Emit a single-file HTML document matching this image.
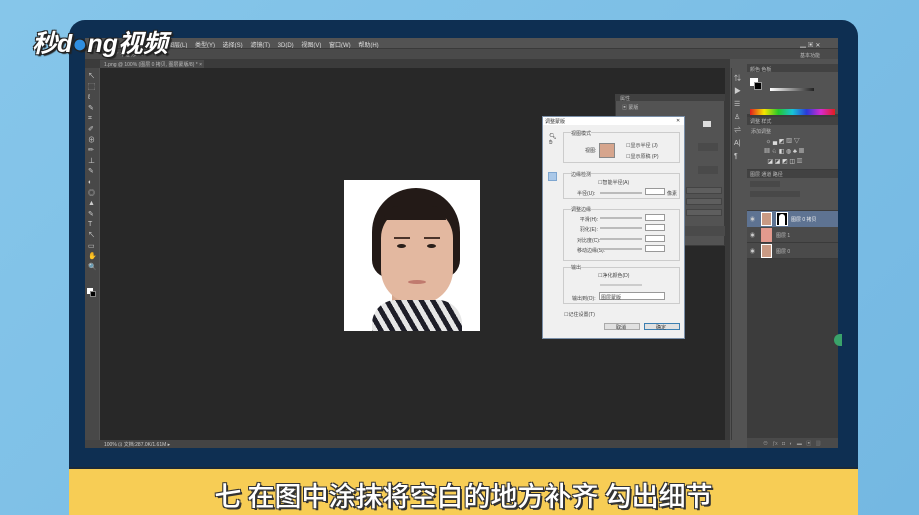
<!DOCTYPE html>
<html><head><meta charset="utf-8"><style>
*{margin:0;padding:0;box-sizing:border-box}
body{width:919px;height:515px;overflow:hidden;background:linear-gradient(135deg,#86c6ea,#74b8e2);position:relative;font-family:"Liberation Sans","Noto Sans CJK SC",sans-serif}
.a{position:absolute}
.t{font-size:5px;color:#bbb;white-space:nowrap}
</style></head><body>
<div class="a" style="left:69px;top:20px;width:789px;height:470px;background:#0e2f52;border-radius:16px 16px 0 0"></div>
<!-- PS window -->
<div class="a" style="left:85px;top:38px;width:753px;height:410px;background:#535353"></div>
<div class="a t" style="left:168px;top:40px;font-size:6px;color:#ddd;word-spacing:6px">图层(L) 类型(Y) 选择(S) 滤镜(T) 3D(D) 视图(V) 窗口(W) 帮助(H)</div>
<div class="a t" style="left:800px;top:40px;color:#ddd;font-size:6px">▁ ▣ ✕</div>
<div class="a" style="left:85px;top:48px;width:753px;height:11px;background:#4a4a4a;border-top:1px solid #3a3a3a"></div>
<div class="a t" style="left:800px;top:52px">基本功能</div>
<div class="a t" style="left:110px;top:51px;color:#ccc">⟋ ⟋ 不透明: 25</div>
<div class="a" style="left:85px;top:59px;width:645px;height:9px;background:#3b3b3b"></div>
<div class="a" style="left:100px;top:60px;width:104px;height:8px;background:#4a4a4a"></div>
<div class="a t" style="left:104px;top:61px">1.png @ 100% (图层 0 拷贝, 图层蒙版/8) * ×</div>
<!-- toolbar -->
<div class="a" style="left:85px;top:68px;width:14px;height:372px;background:#484848"></div>
<div class="a t" style="left:88px;top:72px;color:#ccc;line-height:10.6px;font-size:7px;white-space:pre">↖
⬚
ℓ
✎
⌗
✐
⊕
✏
⊥
✎
◐
◎
▲
✎
T
↖
▭
✋
🔍</div>
<div class="a" style="left:87px;top:288px;width:6px;height:6px;background:#fff"></div>
<div class="a" style="left:90px;top:291px;width:6px;height:6px;background:#000;border:1px solid #888"></div>
<!-- canvas -->
<div class="a" style="left:100px;top:68px;width:625px;height:372px;background:#282828"></div>
<div class="a" style="left:725px;top:68px;width:5px;height:372px;background:#3a3a3a"></div>
<div class="a" style="left:85px;top:440px;width:645px;height:8px;background:#444"></div>
<div class="a t" style="left:104px;top:441px;color:#ccc">100% ⊡   文档:287.0K/1.61M   ▸</div>
<!-- photo -->
<div class="a" style="left:344px;top:180px;width:136px;height:151px;background:#fff;overflow:hidden">
<div class="a" style="left:28px;top:8px;width:88px;height:90px;background:#231a17;border-radius:44px 44px 18px 18px"></div>
<div class="a" style="left:48px;top:112px;width:40px;height:20px;background:#d7a88f"></div>
<div class="a" style="left:37px;top:28px;width:72px;height:96px;background:#e3b8a0;border-radius:30px 30px 34px 34px"></div>
<div class="a" style="left:40px;top:26px;width:62px;height:14px;background:#231a17;border-radius:30px 30px 0 0"></div>
<div class="a" style="left:50px;top:57px;width:16px;height:2px;background:#4a332a"></div>
<div class="a" style="left:80px;top:57px;width:16px;height:2px;background:#4a332a"></div>
<div class="a" style="left:53px;top:64px;width:9px;height:4px;background:#2a1f1a;border-radius:50%"></div>
<div class="a" style="left:83px;top:64px;width:9px;height:4px;background:#2a1f1a;border-radius:50%"></div>
<div class="a" style="left:64px;top:100px;width:18px;height:4px;background:#c07a6e;border-radius:50%"></div>
<div class="a" style="left:28px;top:120px;width:90px;height:40px;background:repeating-linear-gradient(60deg,#1e1e28 0 5px,#e6e6e6 5px 10px);border-radius:24px 24px 0 0"></div>
</div>
<!-- properties panel -->
<div class="a" style="left:615px;top:94px;width:110px;height:152px;background:#535353;border:1px solid #3a3a3a"></div>
<div class="a" style="left:615px;top:94px;width:110px;height:7px;background:#404040"></div>
<div class="a t" style="left:620px;top:95px">属性</div>
<div class="a t" style="left:622px;top:104px">▣ 蒙版</div>
<div class="a" style="left:703px;top:121px;width:8px;height:6px;background:#ddd"></div>
<div class="a" style="left:698px;top:143px;width:20px;height:8px;background:#4a4a4a"></div>
<div class="a" style="left:698px;top:166px;width:20px;height:8px;background:#4a4a4a"></div>
<div class="a" style="left:686px;top:187px;width:36px;height:7px;background:#5e5e5e;border:1px solid #444"></div>
<div class="a" style="left:686px;top:198px;width:36px;height:7px;background:#5e5e5e;border:1px solid #444"></div>
<div class="a" style="left:686px;top:209px;width:36px;height:7px;background:#5e5e5e;border:1px solid #444"></div>
<div class="a" style="left:615px;top:226px;width:110px;height:10px;background:#4a4a4a"></div>
<!-- middle icon column -->
<div class="a" style="left:731px;top:68px;width:14px;height:372px;background:#535353;border-left:1px solid #3a3a3a"></div>
<div class="a t" style="left:734px;top:72px;color:#ccc;line-height:13px;font-size:7px;white-space:pre">⇅
▶
☰
♙
⇌
A|
¶</div>
<!-- right panel -->
<div class="a" style="left:747px;top:64px;width:91px;height:384px;background:#3c3c3c"></div>
<div class="a" style="left:747px;top:64px;width:91px;height:50px;background:#535353"></div>
<div class="a" style="left:747px;top:64px;width:91px;height:8px;background:#424242"></div>
<div class="a t" style="left:750px;top:66px">颜色  色板</div>
<div class="a" style="left:750px;top:78px;width:8px;height:8px;background:#fff"></div>
<div class="a" style="left:754px;top:82px;width:8px;height:8px;background:#000;border:1px solid #999"></div>
<div class="a" style="left:770px;top:88px;width:44px;height:3px;background:linear-gradient(90deg,#fff,#222)"></div>
<div class="a" style="left:750px;top:109px;width:85px;height:6px;background:linear-gradient(90deg,#e21d1d,#f5e500,#25c82c,#18c4d8,#2a39d8,#d82ad0,#e21d1d)"></div>
<div class="a" style="left:747px;top:117px;width:91px;height:52px;background:#535353;border-top:1px solid #3a3a3a"></div>
<div class="a" style="left:747px;top:117px;width:91px;height:8px;background:#424242"></div>
<div class="a t" style="left:750px;top:118px">调整  样式</div>
<div class="a t" style="left:751px;top:128px">添加调整</div>
<div class="a t" style="left:764px;top:137px;color:#ddd;font-size:6px;line-height:10px;white-space:pre"> ☼ ▄ ◩ ▨ ▽
▦ ♘ ◧ ◍ ♣ ▦
  ◪ ◪ ◩ ◫ ▥</div>
<div class="a" style="left:747px;top:170px;width:91px;height:8px;background:#424242"></div>
<div class="a t" style="left:750px;top:171px">图层  通道  路径</div>
<div class="a" style="left:747px;top:178px;width:91px;height:32px;background:#535353"></div>
<div class="a" style="left:750px;top:181px;width:30px;height:6px;background:#484848"></div>
<div class="a" style="left:750px;top:191px;width:50px;height:6px;background:#484848"></div>
<div class="a" style="left:747px;top:211px;width:91px;height:16px;background:#5e7392"></div>
<div class="a" style="left:761px;top:212px;width:11px;height:14px;background:#c99a84;border:1px solid #fff"></div>
<div class="a" style="left:776px;top:212px;width:12px;height:14px;background:#000;border:1px solid #fff"></div>
<div class="a" style="left:779px;top:214px;width:6px;height:11px;background:#fff;border-radius:3px 3px 0 0"></div>
<div class="a t" style="left:791px;top:216px;color:#eee">图层 0 拷贝</div>
<div class="a" style="left:747px;top:227px;width:91px;height:16px;background:#4a4a4a;border-bottom:1px solid #3a3a3a"></div>
<div class="a" style="left:761px;top:228px;width:11px;height:14px;background:#e39a8e"></div>
<div class="a t" style="left:776px;top:232px">图层 1</div>
<div class="a" style="left:747px;top:243px;width:91px;height:16px;background:#4a4a4a;border-bottom:1px solid #3a3a3a"></div>
<div class="a" style="left:761px;top:244px;width:11px;height:14px;background:#c99a84;border:1px solid #fff"></div>
<div class="a t" style="left:776px;top:248px">图层 0</div>
<div class="a t" style="left:750px;top:216px;color:#ccc">◉</div><div class="a t" style="left:750px;top:232px;color:#ccc">◉</div><div class="a t" style="left:750px;top:248px;color:#ccc">◉</div>
<div class="a" style="left:747px;top:438px;width:91px;height:10px;background:#4a4a4a"></div>
<div class="a t" style="left:763px;top:440px;color:#999;word-spacing:3px">⊖ ƒx ◘ ◐ ▬ ▣ ▥</div>
<div class="a" style="left:834px;top:334px;width:8px;height:12px;background:#3aa36a;border-radius:6px 0 0 6px"></div>
<!-- dialog -->
<div class="a" style="left:542px;top:116px;width:143px;height:223px;background:#f0f0f0;border:1px solid #7a8fa8"></div>
<div class="a" style="left:543px;top:117px;width:141px;height:8px;background:#fff"></div>
<div class="a t" style="left:545px;top:118px;color:#333">调整蒙版</div>
<div class="a t" style="left:676px;top:118px;color:#333">✕</div>
<div class="a t" style="left:549px;top:134px;color:#333;font-size:6px;line-height:6px">🔍︎<br>✋︎</div>
<div class="a" style="left:548px;top:172px;width:9px;height:9px;background:#aac8e8;border:1px solid #7ea6d0"></div>
<div class="a" style="left:563px;top:132px;width:117px;height:31px;border:1px solid #ccc"></div>
<div class="a t" style="left:571px;top:130px;color:#444;background:#f0f0f0">视图模式</div>
<div class="a t" style="left:585px;top:147px;color:#444">视图:</div>
<div class="a" style="left:599px;top:143px;width:16px;height:15px;background:#d6a58d;border:1px solid #888"></div>
<div class="a t" style="left:626px;top:142px;color:#444">☐显示半径 (J)</div>
<div class="a t" style="left:626px;top:153px;color:#444">☐显示原稿 (P)</div>
<div class="a" style="left:563px;top:173px;width:117px;height:26px;border:1px solid #ccc"></div>
<div class="a t" style="left:571px;top:171px;color:#444;background:#f0f0f0">边缘检测</div>
<div class="a t" style="left:598px;top:179px;color:#444">☐智能半径(A)</div>
<div class="a t" style="left:577px;top:190px;color:#444">半径(U):</div>
<div class="a" style="left:600px;top:192px;width:42px;height:2px;background:#bbb"></div>
<div class="a" style="left:645px;top:188px;width:20px;height:7px;background:#fff;border:1px solid #999"></div>
<div class="a t" style="left:667px;top:190px;color:#444">像素</div>
<div class="a" style="left:563px;top:209px;width:117px;height:52px;border:1px solid #ccc"></div>
<div class="a t" style="left:571px;top:206px;color:#444;background:#f0f0f0">调整边缘</div>
<div class="a t" style="left:577px;top:215px;color:#444;line-height:10.3px;white-space:pre">  平滑(H):
  羽化(E):
对比度(C):
移动边缘(S):</div>
<div class="a" style="left:600px;top:217px;width:42px;height:2px;background:#bbb"></div>
<div class="a" style="left:600px;top:227px;width:42px;height:2px;background:#bbb"></div>
<div class="a" style="left:600px;top:238px;width:42px;height:2px;background:#bbb"></div>
<div class="a" style="left:600px;top:248px;width:42px;height:2px;background:#bbb"></div>
<div class="a" style="left:645px;top:214px;width:20px;height:7px;background:#fff;border:1px solid #999"></div>
<div class="a" style="left:645px;top:224px;width:20px;height:7px;background:#fff;border:1px solid #999"></div>
<div class="a" style="left:645px;top:235px;width:20px;height:7px;background:#fff;border:1px solid #999"></div>
<div class="a" style="left:645px;top:245px;width:20px;height:7px;background:#fff;border:1px solid #999"></div>
<div class="a" style="left:563px;top:267px;width:117px;height:37px;border:1px solid #ccc"></div>
<div class="a t" style="left:571px;top:264px;color:#444;background:#f0f0f0">输出</div>
<div class="a t" style="left:598px;top:272px;color:#444">☐净化颜色(D)</div>
<div class="a" style="left:600px;top:284px;width:42px;height:2px;background:#ccc"></div>
<div class="a t" style="left:572px;top:295px;color:#444">输出到(O):</div>
<div class="a" style="left:599px;top:292px;width:66px;height:8px;background:#fff;border:1px solid #999"></div>
<div class="a t" style="left:601px;top:294px;color:#444">图层蒙版</div>
<div class="a t" style="left:564px;top:311px;color:#444">☐记住设置(T)</div>
<div class="a" style="left:604px;top:323px;width:36px;height:7px;background:#e1e1e1;border:1px solid #aaa"></div>
<div class="a t" style="left:616px;top:324px;color:#333">取消</div>
<div class="a" style="left:644px;top:323px;width:36px;height:7px;background:#e1e1e1;border:1px solid #3c7fb1"></div>
<div class="a t" style="left:656px;top:324px;color:#333">确定</div>
<!-- logo -->
<div class="a" style="left:32px;top:24px;font-size:25px;font-weight:bold;font-style:italic;color:#fff;text-shadow:-1px -1px 0 #222,1px 1px 0 #222,1px -1px 0 #222,-1px 1px 0 #222,2px 2px 1px #222">秒d<span style="color:#2f8ee0">●</span>ng视频</div>
<!-- caption -->
<div class="a" style="left:69px;top:467px;width:789px;height:48px;background:#f7cd55;border-top:2px solid #1b2a3a"></div>
<div class="a" style="left:69px;top:475px;width:789px;text-align:center;font-size:27px;color:#fff;letter-spacing:0;font-family:'Noto Sans CJK SC',sans-serif;font-weight:500;text-shadow:-1px -1px 0 #333,1px 1px 0 #333,1px -1px 0 #333,-1px 1px 0 #333,2px 2px 0 #333">七 在图中涂抹将空白的地方补齐 勾出细节</div>
</body></html>
